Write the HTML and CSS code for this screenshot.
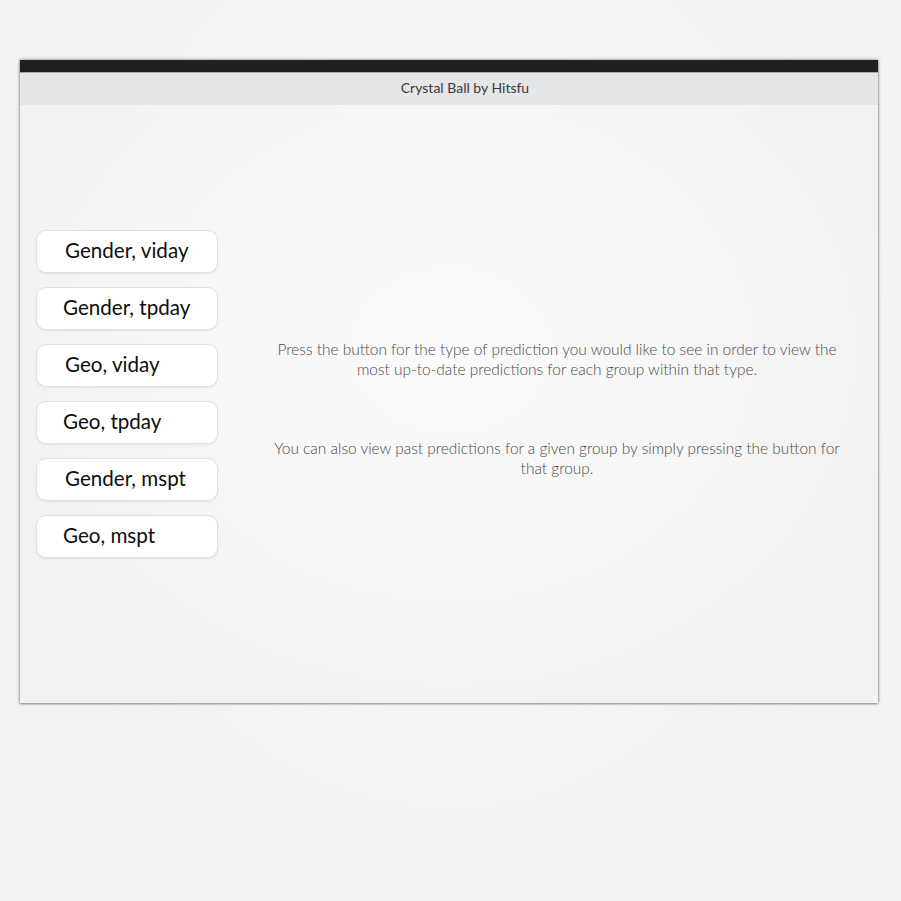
FILE: index.html
```html
<!DOCTYPE html>
<html>
<head>
<meta charset="utf-8">
<link rel="stylesheet" href="styles.css">
</head>
<body>
<div class="window">
  <div class="topbar"></div>
  <div class="header"><span class="title">Crystal Ball by Hitsfu</span></div>
  <div class="content">
    <div class="buttons">
      <div class="btn">Gender, viday</div>
      <div class="btn alt">Gender, tpday</div>
      <div class="btn">Geo, viday</div>
      <div class="btn alt">Geo, tpday</div>
      <div class="btn">Gender, mspt</div>
      <div class="btn alt">Geo, mspt</div>
    </div>
    <div class="info">
      <p class="p1">Press the button for the type of prediction you would like to see in order to view the most up-to-date predictions for each group within that type.</p>
      <p class="p2">You can also view past predictions for a given group by simply pressing the button for that group.</p>
    </div>
  </div>
</div>
</body>
</html>
```

FILE: styles.css
```css
html, body {
  margin: 0;
  padding: 0;
}
body {
  width: 901px;
  height: 901px;
  background: radial-gradient(ellipse at 50% 40%, #f8f8f8 0%, #f2f2f2 70%);
  font-family: "Lato", "Noto Sans", sans-serif;
  overflow: hidden;
}
.window {
  margin: 60px 0 0 20px;
  width: 858px;
  height: 643px;
  display: flex;
  flex-direction: column;
  background: radial-gradient(ellipse at 50% 45%, #fbfbfb 0%, #f2f2f2 75%);
  box-shadow: 0 0 3px rgba(0,0,0,0.55), 0 1px 2px rgba(0,0,0,0.2);
}
.topbar {
  height: 13px;
  background: #231f20;
  border-bottom: 1px solid #a9a9a9;
  box-sizing: border-box;
}
.header {
  height: 32px;
  box-sizing: border-box;
  background: #e5e6e8;
  display: flex;
  align-items: center;
  justify-content: center;
  padding: 0 0 4px 32px;
}
.title {
  font-size: 14px;
  color: #3a3a3a;
  font-weight: 400;
}
.content {
  flex: 1;
  display: flex;
}
.buttons {
  padding: 125px 0 0 16px;
  width: 182px;
  display: flex;
  flex-direction: column;
  gap: 14px;
}
.btn {
  height: 43px;
  box-sizing: border-box;
  background: #fff;
  border: 1px solid #e0e0e0;
  border-radius: 10px;
  box-shadow: 0 1px 2px rgba(0,0,0,0.07);
  font-size: 20.6px;
  color: #0d0d0d;
  display: flex;
  align-items: center;
  padding: 0 0 3px 28px;
}
.btn.alt {
  padding-left: 26px;
}
.info {
  flex: 1;
  padding: 234px 28px 0 46px;
  text-align: center;
  color: #4a4a4a;
  font-size: 15.45px;
  font-weight: 300;
  line-height: 20px;
}
.info p {
  margin: 0;
}
.info .p2 {
  margin-top: 59px;
}
```
